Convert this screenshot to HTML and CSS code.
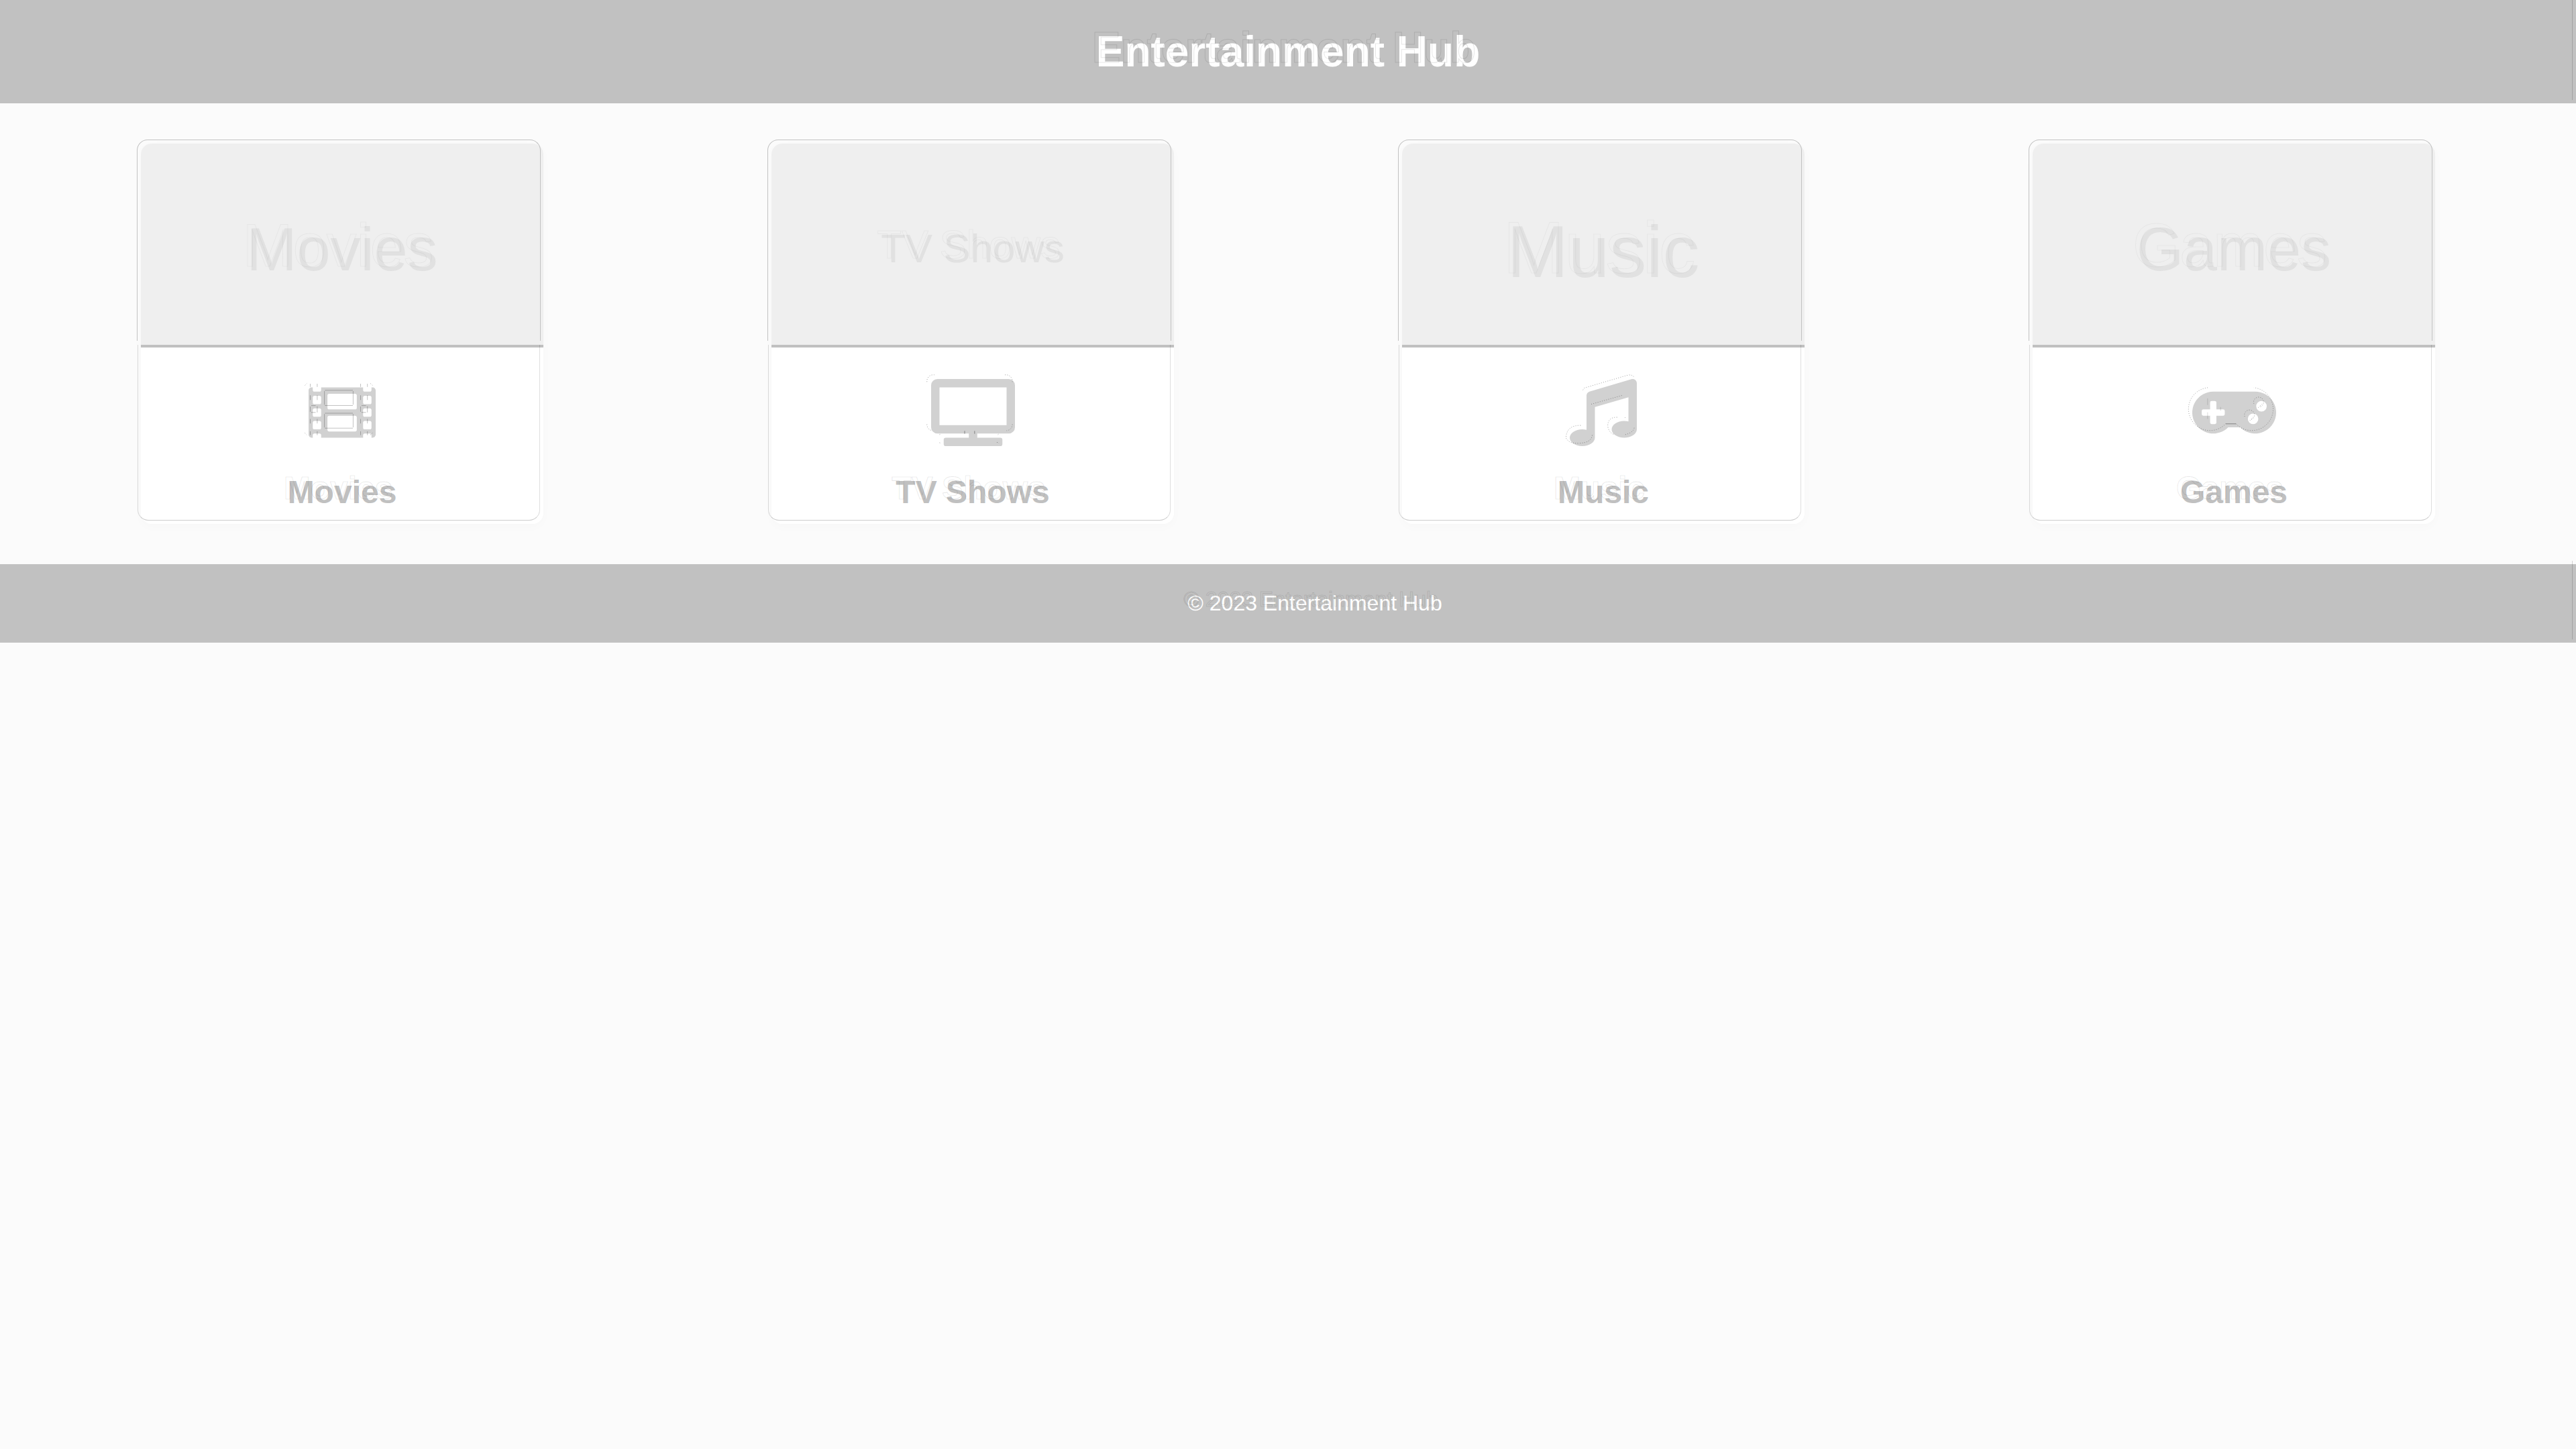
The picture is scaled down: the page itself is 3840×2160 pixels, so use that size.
FILE: index.html
```html
<!DOCTYPE html>
<html lang="en">
<head>
<meta charset="utf-8">
<meta name="viewport" content="width=device-width, initial-scale=1">
<title>Entertainment Hub</title>
<link rel="stylesheet" href="styles.css">
</head>
<body>
<header class="site-header">
  <h1 class="title etched" data-text="Entertainment Hub">Entertainment Hub</h1>
</header>
<main class="cards">
  <article class="card">
    <div class="cover cover-md"><span class="etched" data-text="Movies">Movies</span></div>
    <div class="card-body">
      <svg class="icon" viewBox="0 0 512 512" aria-hidden="true">
        <path d="M488 64h-8v20c0 6.600-5.400 12-12 12h-40c-6.600 0-12-5.400-12-12V64H96v20c0 6.600-5.400 12-12 12H44c-6.600 0-12-5.400-12-12V64h-8C10.700 64 0 74.700 0 88v336c0 13.300 10.700 24 24 24h8v-20c0-6.600 5.400-12 12-12h40c6.600 0 12 5.400 12 12v20h320v-20c0-6.600 5.400-12 12-12h40c6.600 0 12 5.400 12 12v20h8c13.300 0 24-10.700 24-24V88c0-13.300-10.700-24-24-24zM96 372c0 6.600-5.400 12-12 12H44c-6.600 0-12-5.400-12-12v-40c0-6.600 5.400-12 12-12h40c6.600 0 12 5.400 12 12zM96 276c0 6.600-5.400 12-12 12H44c-6.600 0-12-5.400-12-12v-40c0-6.600 5.400-12 12-12h40c6.600 0 12 5.400 12 12zM96 180c0 6.600-5.400 12-12 12H44c-6.600 0-12-5.400-12-12v-40c0-6.600 5.400-12 12-12h40c6.600 0 12 5.400 12 12zM368 388c0 6.600-5.400 12-12 12H156c-6.600 0-12-5.400-12-12v-96c0-6.600 5.400-12 12-12h200c6.600 0 12 5.400 12 12zM368 220c0 6.600-5.400 12-12 12H156c-6.600 0-12-5.400-12-12v-96c0-6.600 5.400-12 12-12h200c6.600 0 12 5.400 12 12zM480 372c0 6.600-5.400 12-12 12h-40c-6.600 0-12-5.400-12-12v-40c0-6.600 5.400-12 12-12h40c6.600 0 12 5.400 12 12zM480 276c0 6.600-5.400 12-12 12h-40c-6.600 0-12-5.400-12-12v-40c0-6.600 5.400-12 12-12h40c6.600 0 12 5.400 12 12zM480 180c0 6.600-5.400 12-12 12h-40c-6.600 0-12-5.400-12-12v-40c0-6.600 5.400-12 12-12h40c6.600 0 12 5.400 12 12z" fill-rule="evenodd"/>
        <path class="line soft" d="M124 86H338M124 202H338M121 92V196M340 92V196M124 261H338M124 375H338M121 267V369M340 267V369M13 36V60M66 36V60M397 36V60M449 36V60M13 124V160M66 124V160M397 124V160M449 124V160M13 210V250M66 208V255M20 203H54M20 255H54M397 210V250M449 208V255M404 203H438M404 255H438M13 305V339M66 305V339M397 305V339M449 305V339M13 399V428M66 399V428M397 399V428M449 399V428"/>
        <path class="dots" d="M-28 48L-14 34M-28 412L-14 426M472 34L488 48M472 426L488 412"/>
      </svg>
      <h2 class="name etched" data-text="Movies">Movies</h2>
    </div>
  </article>
  <article class="card">
    <div class="cover cover-sm"><span class="etched" data-text="TV Shows">TV Shows</span></div>
    <div class="card-body">
      <svg class="icon" viewBox="0 0 640 512" aria-hidden="true">
        <path d="M592 0H48A48 48 0 0 0 0 48v320a48 48 0 0 0 48 48h240v32H112a16 16 0 0 0-16 16v32a16 16 0 0 0 16 16h416a16 16 0 0 0 16-16v-32a16 16 0 0 0-16-16H352v-32h240a48 48 0 0 0 48-48V48a48 48 0 0 0-48-48zM576 352H64V64h512z" fill-rule="evenodd"/>
        <path class="line" d="M256 396V418M332 396V418"/>
        <path class="dots" d="M-32 22V16A48 48 0 0 1 16-32H24M564-32H570A48 48 0 0 1 620 16V22M-32 346V350A48 48 0 0 0 0 392M620 346V350A48 48 0 0 1 576 394M64 424L76 418M64 486L80 492M510 424L518 418M502 484H516V488"/>
      </svg>
      <h2 class="name etched" data-text="TV Shows">TV Shows</h2>
    </div>
  </article>
  <article class="card">
    <div class="cover cover-lg"><span class="etched" data-text="Music">Music</span></div>
    <div class="card-body">
      <svg class="icon" viewBox="0 0 512 512" aria-hidden="true">
        <path d="M512 32c0-21.700-21.100-37-41.600-30.500L150.400 96c-13.300 4.200-22.400 16.500-22.400 30.500v261.400c-10-2.400-20.700-3.900-32-3.900-53 0-96 28.600-96 64s43 64 96 64 96-28.600 96-64V214.300l256-75v184.600c-10-2.400-20.700-3.900-32-3.900-53 0-96 28.600-96 64s43 64 96 64 96-28.600 96-64z"/>
        <path class="dots" d="M100 84L112 68L440-29Q480-38 494-8M164 192L404 124M-28 440Q-20 352 84 354M-28 450Q-8 494 68 490Q166 488 172 426M362 292Q290 290 290 360Q298 410 340 424M424 424Q484 410 492 372M420 292L426 298"/>
      </svg>
      <h2 class="name etched" data-text="Music">Music</h2>
    </div>
  </article>
  <article class="card">
    <div class="cover cover-md"><span class="etched" data-text="Games">Games</span></div>
    <div class="card-body">
      <svg class="icon" viewBox="0 0 640 512" aria-hidden="true">
        <path d="M480 96H160a160 160 0 1 0 114.200 272h91.500A160 160 0 1 0 480 96zM248 268a12 12 0 0 1-12 12h-52v52a12 12 0 0 1-12 12h-24a12 12 0 0 1-12-12v-52H84a12 12 0 0 1-12-12v-24a12 12 0 0 1 12-12h52v-52a12 12 0 0 1 12-12h24a12 12 0 0 1 12 12v52h52a12 12 0 0 1 12 12zM464 344a40 40 0 1 1 40-40 40 40 0 0 1-40 40zM528 248a40 40 0 1 1 40-40 40 40 0 0 1-40 40z" fill-rule="evenodd"/>
        <path class="line" d="M254 342H334"/>
        <path class="line faint" d="M117 148V198M117 254V304M216 214V242"/>
        <path class="dots" d="M118 66A164 164 0 1 0 254 342M334 342A164 164 0 1 0 470 66M470 188a38 38 0 1 1 40 26M400 286a38 38 0 1 1 40 26M504 218L530 192M440 316L466 290"/>
      </svg>
      <h2 class="name etched" data-text="Games">Games</h2>
    </div>
  </article>
</main>
<footer class="site-footer"><p class="copyright etched" data-text="© 2023 Entertainment Hub">© 2023 Entertainment Hub</p></footer>
</body>
</html>
```
FILE: styles.css
```css
* {
  box-sizing: border-box;
}

body {
  margin: 0;
  background: #fbfbfb;
  font-family: "Liberation Sans", Arial, sans-serif;
}

h1, h2, p {
  margin: 0;
}

.site-header,
.site-footer {
  position: relative;
  display: flex;
  justify-content: center;
  padding: 40px;
  background: #c1c1c1;
  color: #fff;
}

.site-footer {
  padding-left: 120px;
}

/* thin rule near the right edge of both bars */
.site-header::after,
.site-footer::after {
  content: "";
  position: absolute;
  top: -5px;
  right: 5px;
  bottom: 5px;
  width: 1px;
  background: rgba(0, 0, 0, 0.16);
}

.title {
  font-size: 64px;
  line-height: 74px;
}

.copyright {
  font-size: 32px;
  line-height: 37px;
}

/* faint outline lying up and to the left of the letters */
.etched {
  position: relative;
  white-space: nowrap;
}

.etched::after {
  content: attr(data-text);
  position: absolute;
  top: -6px;
  left: -6px;
  color: transparent;
  -webkit-text-stroke: 1px rgba(0, 0, 0, 0.1);
}

.cards {
  display: grid;
  grid-template-columns: repeat(4, 1fr);
  justify-items: center;
  padding: 60px 40px;
}

.card {
  width: 100%;
  max-width: 600px;
  border-radius: 16px;
  background: #fff;
  box-shadow: 0 4px 16px rgba(0, 0, 0, 0.02);
}

.cover,
.card-body {
  position: relative;
}

.cover {
  display: flex;
  align-items: center;
  justify-content: center;
  height: 304px;
  border-bottom: 4px solid #c0c0c0;
  border-radius: 16px 16px 0 0;
  background: linear-gradient(#efefef, #efefef) padding-box;
  color: #e1e1e1;
}

.cover .etched::after {
  -webkit-text-stroke-color: rgba(0, 0, 0, 0.04);
}

.cover-sm {
  padding-top: 12px;
  font-size: 60px;
}

.cover-md {
  padding-top: 16px;
  font-size: 90px;
}

.cover-lg {
  padding-top: 20px;
  font-size: 110px;
}

.cover::before,
.card-body::before {
  content: "";
  position: absolute;
  left: -6px;
  right: 4px;
}

.cover::before {
  top: -6px;
  bottom: 6px;
  border: 1px solid #c2c2c2;
  border-bottom: 0;
  border-radius: 16px 16px 0 0;
}

.card-body::before {
  top: -4px;
  right: 5px;
  bottom: 5px;
  left: -5px;
  border: 1px solid rgba(0, 0, 0, 0.13);
  border-top: 0;
  border-bottom-color: rgba(0, 0, 0, 0.2);
  border-radius: 0 0 16px 16px;
}

.card-body {
  display: flex;
  flex-direction: column;
  align-items: center;
  padding: 47px 20px 20px;
}

.icon {
  height: 100px;
  margin-bottom: 41px;
  overflow: visible;
  fill: #d1d1d1;
}

.line,
.dots {
  fill: none;
  stroke: rgba(0, 0, 0, 0.4);
  stroke-width: 5;
}

.dots {
  stroke-dasharray: 5 12;
}

.soft {
  stroke: rgba(0, 0, 0, 0.25);
}

.faint {
  stroke: rgba(0, 0, 0, 0.15);
}

.name {
  color: #c0c0c0;
  font-size: 48px;
  line-height: 55px;
}
```
